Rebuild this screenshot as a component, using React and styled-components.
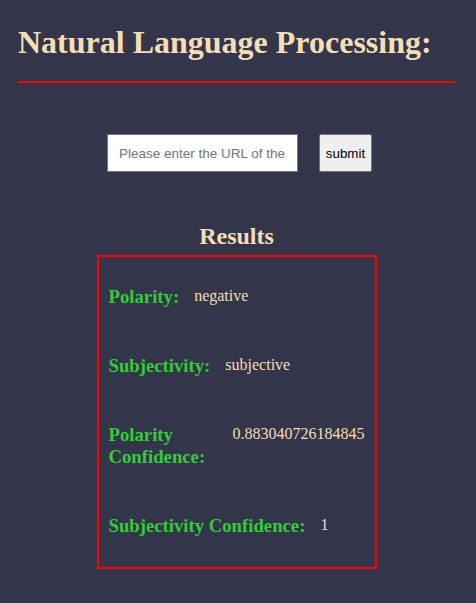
import React from "react";
import styled, { createGlobalStyle } from "styled-components";

const GlobalStyle = createGlobalStyle`
  html, body {
    margin: 0;
    padding: 0;
    background: #33354b;
    font-family: "Liberation Serif", "Times New Roman", serif;
  }
`;

const Page = styled.div`
  min-height: 603px;
  background: #33354b;
  padding: 24px 21px 20px 18px;
  box-sizing: border-box;
`;

const Title = styled.h1`
  margin: 0;
  font-size: 32px;
  line-height: 36px;
  font-weight: bold;
  color: #f5deb3;
`;

const Rule = styled.div`
  height: 2px;
  background: #ff0000;
  margin-top: 21px;
`;

const Form = styled.form`
  display: flex;
  justify-content: center;
  gap: 21px;
  margin-top: 51px;
  padding-left: 6px;
`;

const UrlInput = styled.input`
  width: 191px;
  height: 38px;
  box-sizing: border-box;
  border: 1px solid #767676;
  background: #fff;
  padding: 0 11px;
  font-family: "Liberation Sans", Arial, sans-serif;
  font-size: 13.5px;
  outline: none;

  &::placeholder {
    color: #757575;
  }
`;

const SubmitButton = styled.button`
  width: 53px;
  height: 38px;
  box-sizing: border-box;
  border: 1px solid #767676;
  border-radius: 2px;
  background: #efefef;
  color: #000;
  padding: 0;
  font-family: "Liberation Sans", Arial, sans-serif;
  font-size: 13.33px;
`;

const Section = styled.section`
  display: flex;
  flex-direction: column;
  align-items: center;
  margin-top: 50px;
`;

const ResultsTitle = styled.h2`
  margin: 0 0 5px;
  font-size: 24px;
  line-height: 28px;
  font-weight: bold;
  color: #f5deb3;
`;

const ResultsBox = styled.div`
  width: 280px;
  box-sizing: border-box;
  border: 2px solid #ff0000;
  padding: 29px 10px 30px;
  display: flex;
  flex-direction: column;
  gap: 47px;
`;

const Row = styled.div`
  display: flex;
  align-items: flex-start;
  gap: 15px;
`;

const Label = styled.h3`
  margin: 0;
  font-size: 18.72px;
  line-height: 22px;
  font-weight: bold;
  color: #32cd32;
`;

const Value = styled.p`
  margin: 0;
  font-size: 16px;
  line-height: 20px;
  color: #f5deb3;
  white-space: nowrap;
`;

const results = [
  { label: "Polarity:", value: "negative" },
  { label: "Subjectivity:", value: "subjective" },
  { label: "Polarity Confidence:", value: "0.883040726184845" },
  { label: "Subjectivity Confidence:", value: "1" },
];

const App = () => {
  return (
    <Page>
      <GlobalStyle />
      <Title>Natural Language Processing:</Title>
      <Rule />
      <Form onSubmit={(e) => e.preventDefault()}>
        <UrlInput type="text" placeholder="Please enter the URL of the article" />
        <SubmitButton type="submit">submit</SubmitButton>
      </Form>
      <Section>
        <ResultsTitle>Results</ResultsTitle>
        <ResultsBox>
          {results.map((item) => (
            <Row key={item.label}>
              <Label>{item.label}</Label>
              <Value>{item.value}</Value>
            </Row>
          ))}
        </ResultsBox>
      </Section>
    </Page>
  );
};

export default App;
